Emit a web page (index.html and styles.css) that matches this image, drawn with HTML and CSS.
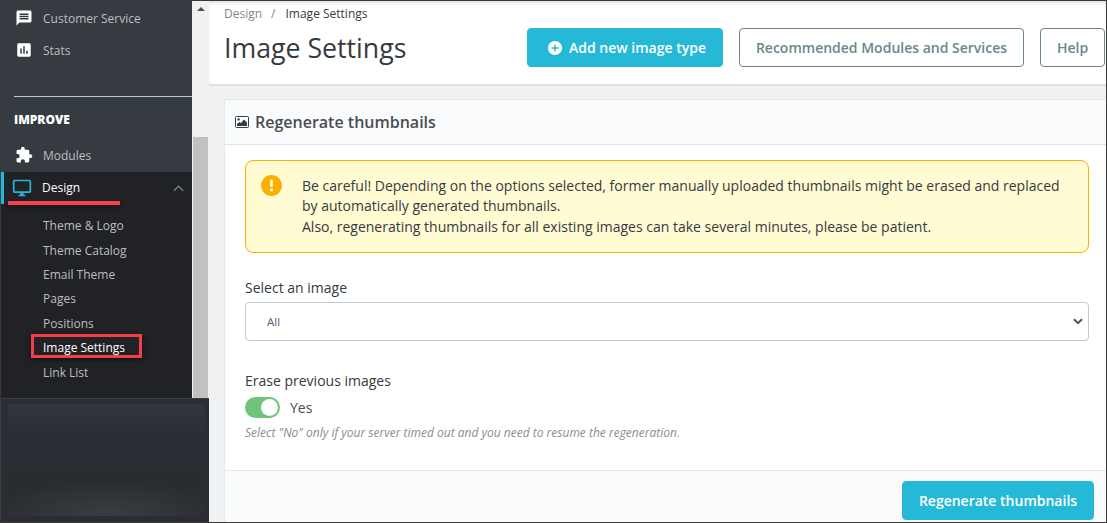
FILE: index.html
```html
<!DOCTYPE html>
<html lang="en">
<head>
<meta charset="utf-8">
<title>Image Settings</title>
<link rel="stylesheet" href="styles.css">
</head>
<body>
<div class="frame">
  <aside class="side">
    <div class="side-top">
      <nav class="nav">
        <div class="nav-light">
          <a class="item"><svg class="ico" viewBox="0 0 24 24"><path d="M20 2H4c-1.1 0-2 .9-2 2v18l4-4h14c1.1 0 2-.9 2-2V4c0-1.1-.9-2-2-2zm-2 12H6v-2h12v2zm0-3H6V9h12v2zm0-3H6V6h12v2z"/></svg>Customer Service</a>
          <a class="item"><svg class="ico" viewBox="0 0 24 24"><path d="M19 3H5c-1.1 0-2 .9-2 2v14c0 1.1.9 2 2 2h14c1.1 0 2-.9 2-2V5c0-1.1-.9-2-2-2zM9 17H7v-7h2v7zm4 0h-2V7h2v10zm4 0h-2v-4h2v4z"/></svg>Stats</a>
          <div class="rule"></div>
          <div class="section">IMPROVE</div>
          <a class="item"><svg class="ico" viewBox="0 0 24 24"><path d="M20.5 11H19V7c0-1.1-.9-2-2-2h-4V3.5C13 2.12 11.88 1 10.5 1S8 2.12 8 3.5V5H4c-1.1 0-1.99.9-1.99 2v3.8H3.5c1.49 0 2.7 1.21 2.7 2.7s-1.21 2.7-2.7 2.7H2V20c0 1.1.9 2 2 2h3.8v-1.5c0-1.49 1.21-2.7 2.7-2.7 1.49 0 2.7 1.21 2.7 2.7V22H17c1.1 0 2-.9 2-2v-4h1.5c1.38 0 2.5-1.12 2.5-2.5S21.88 11 20.5 11z"/></svg>Modules</a>
        </div>
        <div class="nav-dark">
          <a class="item active"><svg class="ico blue" viewBox="0 0 24 24"><path d="M21 2H3c-1.1 0-2 .9-2 2v12c0 1.1.9 2 2 2h7v2H8v2h8v-2h-2v-2h7c1.1 0 2-.9 2-2V4c0-1.1-.9-2-2-2zm0 14H3V4h18v12z"/></svg>Design<svg class="caret" viewBox="0 0 12 7"><path d="M1 6l5-5 5 5"/></svg><span class="underline"></span></a>
          <ul class="sub">
            <li><a>Theme &amp; Logo</a></li>
            <li><a>Theme Catalog</a></li>
            <li><a>Email Theme</a></li>
            <li><a>Pages</a></li>
            <li><a>Positions</a></li>
            <li><a class="current">Image Settings</a></li>
            <li><a>Link List</a></li>
          </ul>
        </div>
      </nav>
      <div class="scrollbar">
        <span class="arrow"></span>
        <span class="thumb"></span>
      </div>
    </div>
    <div class="blurred"><div class="blurred-in"></div></div>
  </aside>
  <main class="main">
    <header class="head">
      <div class="crumbs"><span class="crumb-a">Design</span><span class="crumb-sep">/</span><span class="crumb-b">Image Settings</span></div>
      <div class="head-row">
        <h1 class="title">Image Settings</h1>
        <div class="actions">
          <button class="btn primary add"><svg class="plus" viewBox="2 2 20 20"><path d="M12 2C6.48 2 2 6.48 2 12s4.48 10 10 10 10-4.48 10-10S17.52 2 12 2zm5 11h-4v4h-2v-4H7v-2h4V7h2v4h4v2z"/></svg>Add new image type</button>
          <button class="btn outline rec">Recommended Modules and Services</button>
          <button class="btn outline help">Help</button>
        </div>
      </div>
    </header>
    <div class="content">
      <section class="card">
        <h2 class="card-head"><svg class="pic" viewBox="0 0 14 12"><rect x=".5" y=".5" width="13" height="11" rx="1" fill="#fff" stroke="#363a41"/><circle cx="3.6" cy="3.4" r="1.2" fill="#363a41"/><path d="M2 10V8l2.5-2 1.5 1 3-3.500 3 3V10z" fill="#363a41"/></svg>Regenerate thumbnails</h2>
        <div class="card-body">
          <div class="alert">
            <svg class="warn" viewBox="2 2 20 20"><path d="M12 2C6.48 2 2 6.48 2 12s4.48 10 10 10 10-4.48 10-10S17.52 2 12 2zm1.300 15.500h-2.600v-2.600h2.600v2.600zm0-4.200h-2.600V6.500h2.600v6.800z"/></svg>
            <p>Be careful! Depending on the options selected, former manually uploaded thumbnails might be erased and replaced by automatically generated thumbnails.<br>Also, regenerating thumbnails for all existing images can take several minutes, please be patient.</p>
          </div>
          <label class="label label-select">Select an image</label>
          <div class="select-wrap">
            <select class="select"><option>All</option></select>
            <svg class="chev" viewBox="0 0 10 7"><path d="M1 1.200l4 4 4-4"/></svg>
          </div>
          <label class="label label-erase">Erase previous images</label>
          <div class="switch-row"><span class="switch"><span class="knob"></span></span><span class="yes">Yes</span></div>
          <p class="hint">Select "No" only if your server timed out and you need to resume the regeneration.</p>
        </div>
        <footer class="card-foot"><button class="btn primary regen">Regenerate thumbnails</button></footer>
      </section>
    </div>
  </main>
</div>
</body>
</html>
```
FILE: styles.css
```css
* { box-sizing: border-box; }
html, body { margin: 0; padding: 0; height: 100%; overflow: hidden; }
body { font-family: "Open Sans", "Noto Sans", sans-serif; color: #363a41; background: #fff; }
.frame { width: 1107px; height: 523px; display: flex; border: 1px solid #3a3a3a; overflow: hidden; background: #eff1f2; }

.side { width: 208px; flex: none; display: flex; flex-direction: column; height: 521px; }
.side-top { display: flex; height: 397px; flex: none; }
.nav { width: 191px; flex: none; display: flex; flex-direction: column; background: #363a41; }
.nav-light { height: 171px; flex: none; padding-top: 1px; }
.nav-dark { flex: 1; background: #202226; }
.item { height: 32px; display: flex; align-items: center; font-size: 12px; color: #bebebe; padding-left: 14px; position: relative; }
.ico { width: 18px; height: 18px; fill: #fff; margin-right: 10px; flex: none; }
.rule { height: 1px; background: #bbcdd2; margin: 30px 0 0 13px; }
.section { height: 42px; line-height: 46px; padding-left: 13px; font-size: 12px; font-weight: 800; color: #fff; }
.active { height: 32px; color: #fff; border-left: 3px solid #25b9d7; padding-left: 8px; font-weight: 400; padding-bottom: 2px; }
.ico.blue { width: 20px; height: 20px; fill: #25b9d7; margin: 1px 10px 0 0; }
.caret { position: absolute; right: 8px; top: 13px; width: 11px; height: 7px; fill: none; stroke: #6c868e; stroke-width: 1.500; }
.underline { position: absolute; left: 4px; bottom: -1px; width: 112px; height: 4px; background: #fb3f47; box-shadow: 0 2px 4px rgba(0,0,0,.4); }
.sub { list-style: none; margin: 0; padding: 9.500px 0 0 42px; }
.sub li { height: 24.400px; display: flex; align-items: center; font-size: 12px; color: #bebebe; }
.sub a { position: relative; }
.current { color: #fff; }
.current::after { content: ""; box-sizing: border-box; position: absolute; left: -12px; top: -5px; width: 111px; height: 24px; border: 3px solid #f63d46; box-shadow: 0 2px 5px rgba(0,0,0,.5); }

.scrollbar { width: 17px; flex: none; background: #f1f1f1; display: flex; flex-direction: column; align-items: center; }
.arrow { margin-top: 6px; width: 0; height: 0; border-left: 4px solid transparent; border-right: 4px solid transparent; border-bottom: 4px solid #505050; }
.thumb { width: 15px; height: 261px; margin-top: 126px; background: #c1c1c1; }

.blurred { flex: 1; background: #2a2d34; padding: 5px 4px 6px 7px; border-top: 1px solid #3a3d45; }
.blurred-in { height: 100%; background: radial-gradient(ellipse 65% 32% at 50% 100%, #3a3d42 0%, rgba(58,61,66,0) 100%), linear-gradient(180deg, #31353d 0%, #2a2d33 30%, #292b30 100%); }

.main { flex: 1; min-width: 0; display: flex; flex-direction: column; }
.head { height: 85px; flex: none; background: #fff; border-bottom: 2px solid #dfe1e3; padding: 5px 0 0 15px; box-shadow: inset 0 4px 5px -3px rgba(0,0,0,.18); }
.crumbs { font-size: 12px; line-height: 16px; display: flex; }
.crumb-a { color: #7a8a90; }
.crumb-sep { color: #7a8a90; margin: 0 10px 0 9px; }
.crumb-b { color: #363a41; }
.head-row { display: flex; align-items: flex-start; justify-content: space-between; margin-top: 6px; }
.title { margin: 1px 0 0; font-size: 26.700px; line-height: 38px; font-weight: 400; color: #363a41; }
.actions { display: flex; padding-right: 1px; }
.btn { font-family: inherit; font-size: 14px; font-weight: 600; height: 39px; border-radius: 4px; display: inline-flex; align-items: center; justify-content: center; padding: 0; cursor: pointer; }
.primary { background: #25b9d7; border: 1px solid #25b9d7; color: #fff; }
.outline { background: #fff; border: 1px solid #6c868e; color: #6c868e; }
.add { width: 196px; padding-left: 4px; }
.plus { width: 14px; height: 14px; fill: #fff; margin-right: 7px; }
.rec { width: 285px; margin-left: 16px; }
.help { width: 65px; margin-left: 16px; }

.content { flex: 1; padding: 13px 0 0 15px; min-height: 0; }
.card { height: 430px; background: #fff; border: 1px solid #e4e8ea; border-right: 0; display: flex; flex-direction: column; }
.card-head { margin: 0; height: 45px; flex: none; display: flex; align-items: center; padding-left: 10px; font-size: 16px; font-weight: 600; color: #4a4d52; background: #fafbfc; border-bottom: 1px solid #dbe6e9; }
.pic { width: 14px; height: 12px; margin-right: 6px; }
.card-body { height: 326px; flex: none; padding: 15px 17px 0 20px; border-bottom: 1px solid #e8e8e8; }
.alert { height: 93px; display: flex; background: #fffbd3; border: 1px solid #fab000; border-radius: 8px; padding: 14px 20px 0 15px; }
.warn { width: 21px; height: 21px; fill: #fab000; flex: none; margin-right: 20px; }
.alert p { margin: 1px 0 0; font-size: 14px; line-height: 20.300px; color: #363a41; }
.label { display: block; font-size: 14px; line-height: 20px; color: #363a41; }
.label-select { margin-top: 25px; }
.select-wrap { position: relative; margin-top: 4px; height: 39px; }
.select { width: 100%; height: 39px; appearance: none; background: #fff; border: 1px solid #bbcdd2; border-radius: 4px; padding: 0 0 0 21px; font-family: inherit; font-size: 11.500px; color: #5a5d72; }
.chev { position: absolute; right: 6px; top: 16px; width: 10px; height: 7px; fill: none; stroke: #50535a; stroke-width: 2; }
.label-erase { margin-top: 30px; }
.switch-row { display: flex; align-items: center; margin-top: 6px; height: 21px; }
.switch { width: 35px; height: 21px; border-radius: 11px; background: #70c47a; display: flex; justify-content: flex-end; align-items: center; padding-right: 2px; }
.knob { width: 17px; height: 17px; border-radius: 50%; background: #fff; }
.yes { margin-left: 10px; font-size: 14px; color: #4a4d52; }
.hint { margin: 7px 0 0; font-size: 12px; line-height: 15px; font-style: italic; color: #8a8d90; }
.card-foot { flex: 1; background: #fafbfc; display: flex; justify-content: flex-end; padding: 10px 12px 0 0; }
.regen { width: 192px; }
```
